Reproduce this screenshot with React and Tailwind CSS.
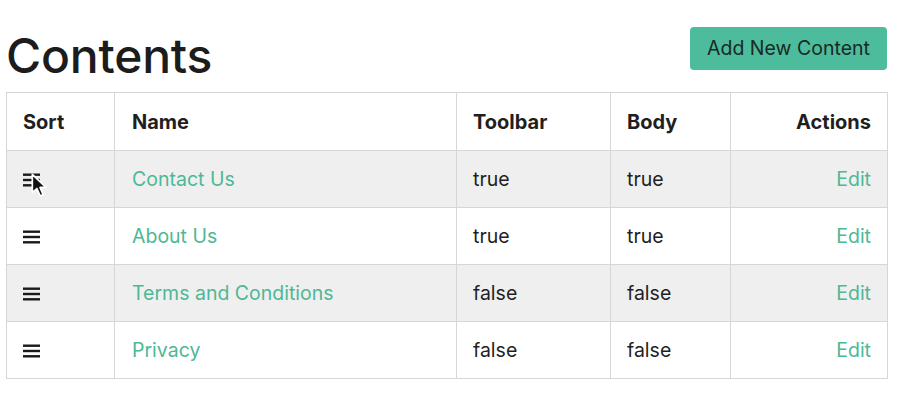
import React from "react";

const rows = [
  { name: "Contact Us", toolbar: "true", body: "true", cursor: true },
  { name: "About Us", toolbar: "true", body: "true" },
  { name: "Terms and Conditions", toolbar: "false", body: "false" },
  { name: "Privacy", toolbar: "false", body: "false" },
];

function Bars() {
  return (
    <svg width="18" height="14" viewBox="0 0 18 14" className="block">
      <rect x="0" y="0.5" width="17" height="2.4" fill="#1a1a1a" />
      <rect x="0" y="5.8" width="17" height="2.4" fill="#1a1a1a" />
      <rect x="0" y="11.1" width="17" height="2.4" fill="#1a1a1a" />
    </svg>
  );
}

function Cursor() {
  return (
    <svg width="17" height="25" viewBox="0 0 13 19" className="absolute left-[8px] top-[0px] overflow-visible">
      <path d="M1 1 L1 15 L4.5 11.8 L7 17.5 L9.3 16.5 L6.9 11 L11.5 11 Z" fill="#111" stroke="#fff" strokeWidth="1.3" strokeLinejoin="round" />
    </svg>
  );
}

export default function App() {
  return (
    <div className="w-[900px] h-[400px] bg-white text-[#1f1f1f]" style={{ fontFamily: "Inter, 'Liberation Sans', sans-serif" }}>
      <div className="flex items-start justify-between pl-[6px] pr-[13px]">
        <h1 className="text-[48px] leading-none font-medium tracking-[-0.2px] mt-[32px] text-[#1c1c1c]">Contents</h1>
        <button className="mt-[27px] h-[43px] w-[197px] rounded-[4px] bg-[#4cbc9c] text-[19.5px] text-[#1a2a24]">Add New Content</button>
      </div>
      <table className="ml-[6px] mt-[12px] table-fixed border-collapse w-[881px] text-[19.5px]">
        <colgroup>
          <col className="w-[108px]" />
          <col className="w-[342px]" />
          <col className="w-[154px]" />
          <col className="w-[120px]" />
          <col className="w-[157px]" />
        </colgroup>
        <thead>
          <tr className="h-[58px]">
            <th className="border border-[#d6d6da] text-left font-bold pl-[16px] text-[20px]">Sort</th>
            <th className="border border-[#d6d6da] text-left font-bold pl-[17px] text-[20px]">Name</th>
            <th className="border border-[#d6d6da] text-left font-bold pl-[16px] text-[20px]">Toolbar</th>
            <th className="border border-[#d6d6da] text-left font-bold pl-[16px] text-[20px]">Body</th>
            <th className="border border-[#d6d6da] text-right font-bold pr-[16px] text-[20px]">Actions</th>
          </tr>
        </thead>
        <tbody>
          {rows.map((r, i) => (
            <tr key={r.name} className={`h-[57px] ${i % 2 === 0 ? "bg-[#efeff0]" : "bg-white"}`}>
              <td className="border border-[#d6d6da] pl-[16px] pt-[1px]">
                <div className="relative w-[18px]">
                  <Bars />
                  {r.cursor && <Cursor />}
                </div>
              </td>
              <td className="border border-[#d6d6da] pl-[17px] pt-[2px] text-[#4db896]">{r.name}</td>
              <td className="border border-[#d6d6da] pl-[16px] pt-[2px]">{r.toolbar}</td>
              <td className="border border-[#d6d6da] pl-[16px] pt-[2px]">{r.body}</td>
              <td className="border border-[#d6d6da] pr-[16px] pt-[2px] text-right text-[#4db896]">Edit</td>
            </tr>
          ))}
        </tbody>
      </table>
    </div>
  );
}
